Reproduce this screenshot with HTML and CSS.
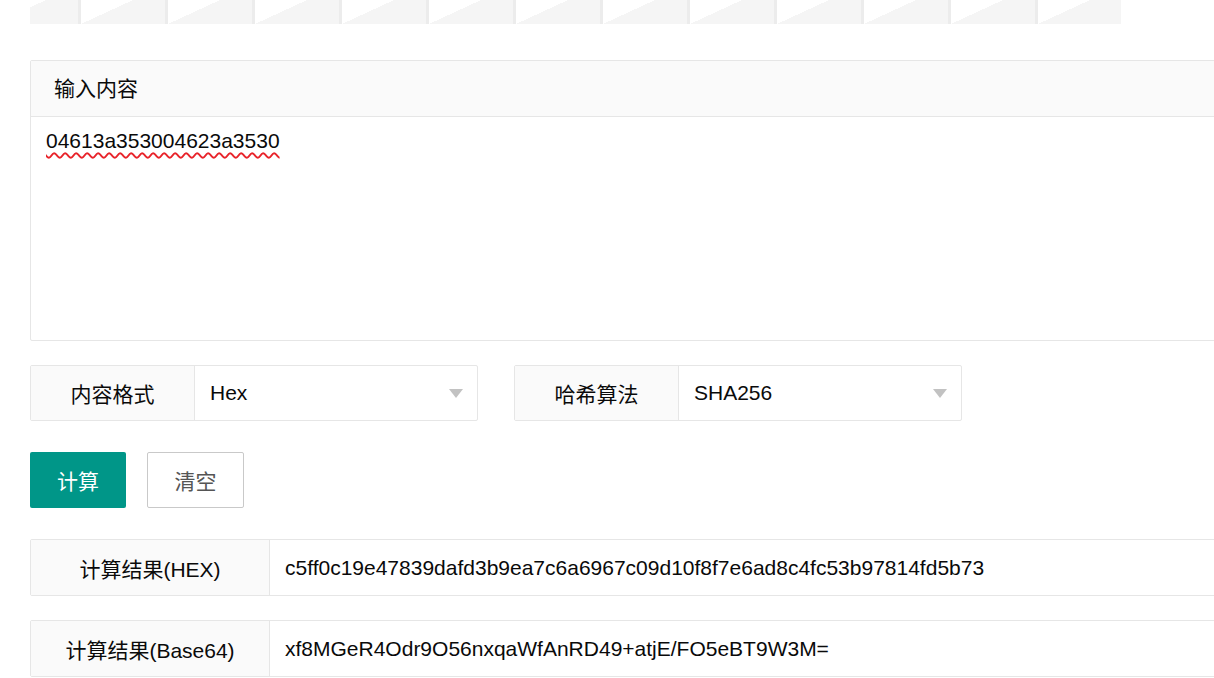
FILE: index.html
```html
<!DOCTYPE html>
<html lang="zh-CN">
<head>
<meta charset="utf-8">
<title>哈希计算</title>
<link rel="stylesheet" href="styles.css">
</head>
<body>
<div class="page">
  <div class="strip">
    <div class="tiles">
      <span class="tile"></span><span class="tile"></span><span class="tile"></span><span class="tile"></span><span class="tile"></span><span class="tile"></span><span class="tile"></span><span class="tile"></span><span class="tile"></span><span class="tile"></span><span class="tile"></span><span class="tile"></span><span class="tile"></span>
    </div>
  </div>

  <div class="panel">
    <div class="panel-head">输入内容</div>
    <div class="panel-body"><span class="spell">04613a353004623a3530</span></div>
  </div>

  <div class="selects">
    <div class="group">
      <div class="label">内容格式</div>
      <div class="select">Hex<span class="caret"></span></div>
    </div>
    <div class="group">
      <div class="label">哈希算法</div>
      <div class="select">SHA256<span class="caret"></span></div>
    </div>
  </div>

  <div class="buttons">
    <button class="btn btn-primary">计算</button>
    <button class="btn btn-default">清空</button>
  </div>

  <div class="result">
    <div class="result-label">计算结果(HEX)</div>
    <div class="result-value">c5ff0c19e47839dafd3b9ea7c6a6967c09d10f8f7e6ad8c4fc53b97814fd5b73</div>
  </div>
  <div class="result result-last">
    <div class="result-label">计算结果(Base64)</div>
    <div class="result-value">xf8MGeR4Odr9O56nxqaWfAnRD49+atjE/FO5eBT9W3M=</div>
  </div>
</div>
</body>
</html>
```

FILE: styles.css
```css
html, body {
  margin: 0;
  padding: 0;
  overflow: hidden;
  background: #fff;
}
body {
  font-family: "Liberation Sans", "Noto Sans CJK SC", sans-serif;
  font-size: 21px;
  color: #0a0a0a;
}
.page {
  padding-left: 30px;
  width: 1260px;
}

/* top strip of tiles */
.strip {
  width: 1091px;
  height: 24px;
  overflow: hidden;
  background: #ececec;
  margin-bottom: 36px;
}
.tiles {
  display: flex;
  gap: 3px;
  margin-left: -36px;
  height: 24px;
}
.tile {
  flex: 0 0 84px;
  height: 24px;
  background: linear-gradient(155.2deg, #ffffff 21.8px, #f5f5f5 21.8px);
}

/* input panel */
.panel {
  border: 1px solid #e6e6e6;
  border-radius: 2px;
  margin-bottom: 24px;
}
.panel-head {
  height: 55px;
  line-height: 55px;
  padding-left: 23px;
  background: #fafafa;
  border-bottom: 1px solid #e6e6e6;
}
.panel-body {
  height: 223px;
  box-sizing: border-box;
  padding: 10px 15px;
  line-height: 28px;
}
.spell {
  text-decoration: underline wavy #e8232a;
  text-decoration-thickness: 1.5px;
  text-underline-offset: 4px;
}

/* selects */
.selects {
  display: flex;
  gap: 36px;
  margin-bottom: 31px;
}
.group {
  display: flex;
  width: 448px;
  height: 56px;
  box-sizing: border-box;
  border: 1px solid #e6e6e6;
  border-radius: 2px;
}
.label {
  width: 163px;
  flex: none;
  background: #fafafa;
  border-right: 1px solid #e6e6e6;
  display: flex;
  align-items: center;
  justify-content: center;
}
.select {
  flex: 1;
  position: relative;
  display: flex;
  align-items: center;
  padding-left: 15px;
}
.caret {
  position: absolute;
  right: 14px;
  top: 50%;
  margin-top: -4px;
  width: 0;
  height: 0;
  border-left: 7px solid transparent;
  border-right: 7px solid transparent;
  border-top: 9px solid #c2c2c2;
}

/* buttons */
.buttons {
  display: flex;
  gap: 21px;
  margin-bottom: 31px;
}
.btn {
  height: 56px;
  font-family: inherit;
  font-size: 21px;
  border-radius: 2px;
  padding: 0;
  cursor: pointer;
}
.btn-primary {
  width: 96px;
  background: #009688;
  color: #fff;
  border: none;
}
.btn-default {
  width: 97px;
  background: #fff;
  color: #555;
  border: 1px solid #c9c9c9;
}

/* results */
.result {
  display: flex;
  height: 57px;
  box-sizing: border-box;
  border: 1px solid #e6e6e6;
  border-radius: 2px;
  margin-bottom: 24px;
}
.result-last {
  margin-bottom: 0;
}
.result-label {
  width: 238px;
  flex: none;
  background: #fafafa;
  border-right: 1px solid #e6e6e6;
  display: flex;
  align-items: center;
  justify-content: center;
}
.result-value {
  flex: 1;
  display: flex;
  align-items: center;
  padding-left: 15px;
}
```
